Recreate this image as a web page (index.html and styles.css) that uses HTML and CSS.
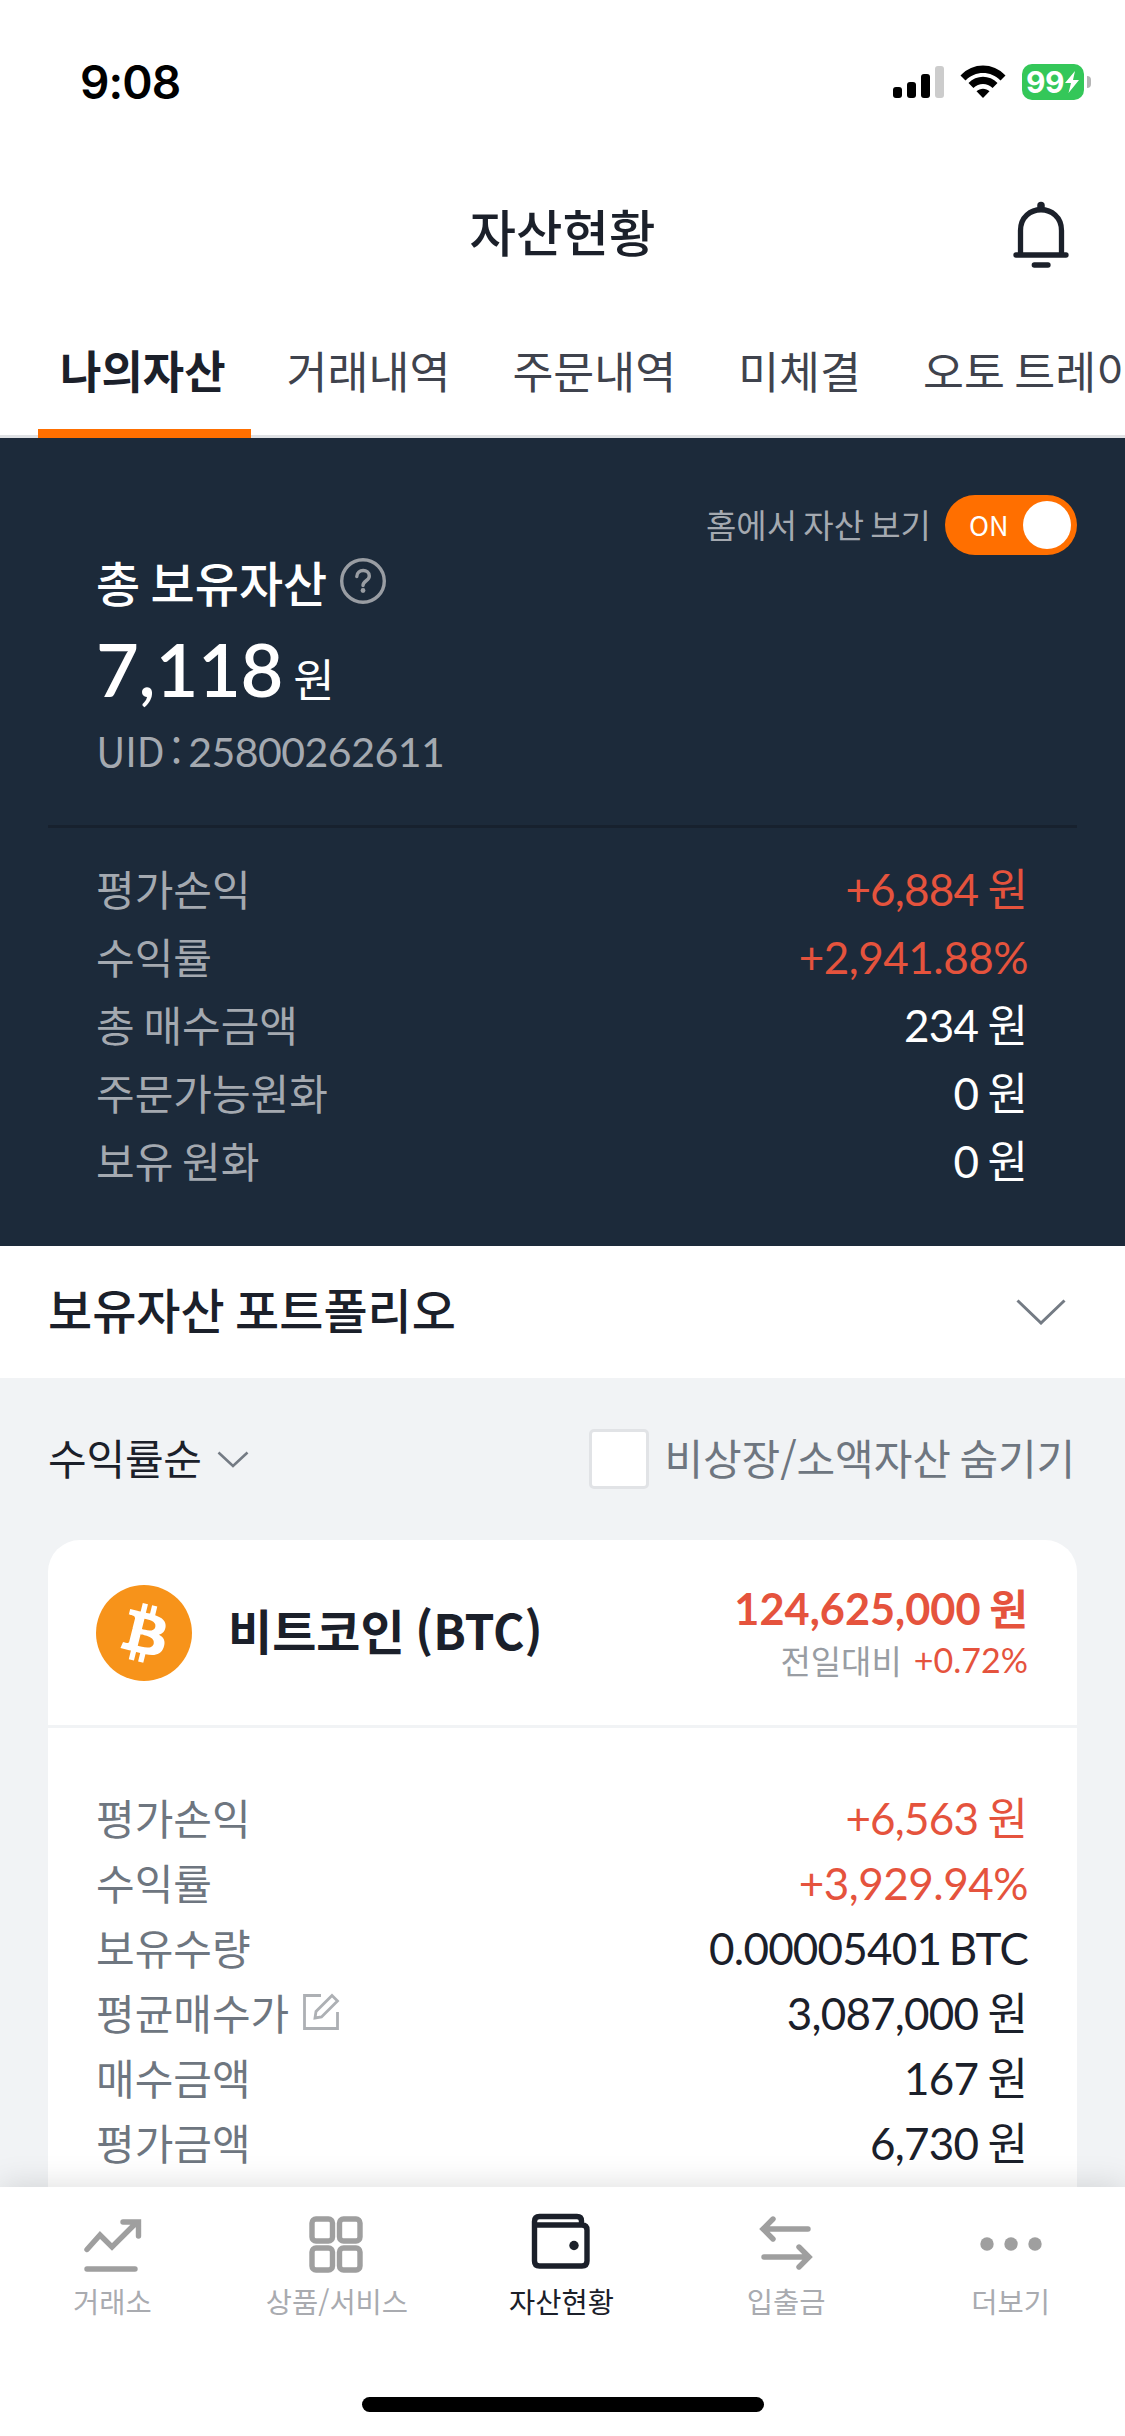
FILE: index.html
```html
<!DOCTYPE html>
<html lang="ko">
<head>
<meta charset="utf-8">
<title>자산현황</title>
<link rel="stylesheet" href="styles.css">
</head>
<body>
<div class="screen">
  <div class="statusbar">
    <span class="clock">9:08</span>
    <div class="status-icons">
      <svg class="signal" width="52" height="34" viewBox="0 0 52 34"><rect x="0" y="22" width="9" height="11" rx="3"/><rect x="14" y="17" width="9" height="16" rx="3"/><rect x="28" y="9" width="9" height="24" rx="3"/><rect x="42" y="1" width="9" height="32" rx="3" fill="#ccc"/></svg>
      <svg class="wifi" width="46" height="34" viewBox="0 0 46 34"><path d="M0.500 10.500C13 -2.800 33 -2.800 45.500 10.500L40.500 15.500C31 5.500 15 5.500 5.500 15.500Z"/><path d="M8.500 18C16.500 9.800 29.500 9.800 37.500 18L32.600 23C27 17.500 19 17.500 13.400 23Z"/><path d="M16.500 26.200C20 22.800 26 22.800 29.500 26.200L23 33Z"/></svg>
      <div class="battery"><span class="battery-level">99</span><svg width="16" height="24" viewBox="0 0 16 24"><path fill="#fff" d="M11 1L1 13H7L4.500 23L15 10H9Z"/></svg></div>
      <span class="battery-tip"></span>
    </div>
  </div>
  <header class="titlebar">
    <h1 class="title">자산현황</h1>
    <svg class="bell" width="58" height="68" viewBox="0 0 58 68" fill="none" stroke="#1b202a" stroke-width="5.300" stroke-linecap="round"><path d="M29 4.500V7" stroke-width="7.500"/><path d="M8.500 53V29.500C8.500 1.800 49.500 1.800 49.500 29.500V53"/><path d="M4 54H54M22.300 64H36"/></svg>
  </header>
  <nav class="tabs">
    <span class="tab tab-active">나의자산</span><span class="tab">거래내역</span><span class="tab">주문내역</span><span class="tab">미체결</span><span class="tab">오토 트레이딩</span>
  </nav>
  <section class="summary">
    <div class="home-view"><span class="home-label">홈에서 자산 보기</span><div class="toggle"><span>ON</span><i class="knob"></i></div></div>
    <div class="total-label"><span>총 보유자산</span><svg width="46" height="50" viewBox="0 0 46 50" fill="none" stroke="#999da3" stroke-width="3.400"><circle cx="23" cy="25" r="21.300"/><path d="M16.800 20.500C17 12.500 29.300 12.500 29.300 20C29.300 25 23 24.500 23 29.500" stroke-linecap="round"/><circle cx="23" cy="34.500" r="2.400" fill="#999da3" stroke="none"/></svg></div>
    <div class="total"><span class="num total-number">7,118</span><span class="total-unit">원</span></div>
    <div class="uid">UID : <span class="num">25800262611</span></div>
    <dl class="rows summary-rows">
      <div class="row"><dt>평가손익</dt><dd class="up"><span class="num">+6,884</span> 원</dd></div>
      <div class="row"><dt>수익률</dt><dd class="up"><span class="num percent">+2,941.88%</span></dd></div>
      <div class="row"><dt>총 매수금액</dt><dd><span class="num">234</span> 원</dd></div>
      <div class="row"><dt>주문가능원화</dt><dd><span class="num">0</span> 원</dd></div>
      <div class="row"><dt>보유 원화</dt><dd><span class="num">0</span> 원</dd></div>
    </dl>
  </section>
  <section class="portfolio"><h2>보유자산 포트폴리오</h2><svg width="50" height="26" viewBox="0 0 50 26" fill="none" stroke="#747b84" stroke-width="3"><path d="M1.500 1.500L25 24L48.500 1.500"/></svg></section>
  <main class="holdings">
    <div class="filters">
      <span class="sort">수익률순</span><svg class="sort-arrow" width="32" height="17" viewBox="0 0 32 17" fill="none" stroke="#747b84" stroke-width="2.600"><path d="M1.500 1.500L16 15L30.500 1.500"/></svg>
      <span class="checkbox"></span><span class="hide-label">비상장/소액자산 숨기기</span>
    </div>
    <article class="card">
      <div class="card-head">
        <svg class="coin" width="96" height="96" viewBox="0 0 32 32"><circle cx="16" cy="16" r="16" fill="#f7931a"/><path fill="#fff" d="M23.189 14.020c.314-2.096-1.283-3.223-3.465-3.975l.708-2.840-1.728-.43-.69 2.765c-.454-.114-.92-.22-1.385-.326l.695-2.783L15.596 6l-.708 2.839c-.376-.086-.746-.17-1.104-.26l.002-.009-2.384-.595-.46 1.846s1.283.294 1.256.312c.7.175.826.638.805 1.006l-.806 3.235c.048.012.110.030.18.057l-.183-.045-1.130 4.532c-.086.212-.303.531-.793.410.018.025-1.256-.313-1.256-.313l-.858 1.978 2.250.561c.418.105.828.215 1.231.318l-.715 2.872 1.727.430.708-2.840c.472.127.930.245 1.378.357l-.706 2.828 1.728.430.715-2.866c2.948.558 5.164.333 6.097-2.333.752-2.146-.037-3.385-1.588-4.192 1.130-.26 1.980-1.003 2.207-2.538zm-3.950 5.538c-.533 2.147-4.148.986-5.320.695l.950-3.805c1.172.293 4.929.872 4.370 3.110zm.535-5.569c-.487 1.953-3.495.960-4.470.717l.860-3.450c.975.243 4.118.696 3.610 2.733z"/></svg>
        <h3 class="coin-name">비트코인 (BTC)</h3>
        <div class="quote"><div class="price"><span class="num">124,625,000</span> 원</div><div class="change"><span>전일대비</span><span class="num up">+0.72%</span></div></div>
      </div>
      <dl class="rows card-rows">
        <div class="row"><dt>평가손익</dt><dd class="up"><span class="num">+6,563</span> 원</dd></div>
        <div class="row"><dt>수익률</dt><dd class="up"><span class="num percent">+3,929.94%</span></dd></div>
        <div class="row"><dt>보유수량</dt><dd><span class="num">0.00005401 BTC</span></dd></div>
        <div class="row"><dt>평균매수가<svg class="edit" width="38" height="38" viewBox="0 0 38 38" fill="none" stroke="#adb0b4" stroke-width="2.800"><path d="M19 2.500H2.500V35.500H35.500V19"/><path d="M13 25L14 18.500L30 2.500L35.500 8L19.500 24Z"/></svg></dt><dd><span class="num">3,087,000</span> 원</dd></div>
        <div class="row"><dt>매수금액</dt><dd><span class="num">167</span> 원</dd></div>
        <div class="row"><dt>평가금액</dt><dd><span class="num">6,730</span> 원</dd></div>
      </dl>
    </article>
  </main>
  <nav class="bottom">
    <div class="items">
      <div class="item"><svg width="66" height="66" viewBox="0 0 66 66"><path d="M8 42.500L21 28L33 40L58 15M44 15H59.500V29M8 62H56"/></svg><span>거래소</span></div>
      <div class="item"><svg width="66" height="66" viewBox="0 0 66 66"><rect x="8" y="12" width="20.500" height="22" rx="4"/><rect x="35.500" y="12" width="20.500" height="22" rx="4"/><rect x="8" y="41" width="20.500" height="22" rx="4"/><rect x="35.500" y="41" width="20.500" height="22" rx="4"/></svg><span>상품/서비스</span></div>
      <div class="item current"><svg width="66" height="66" viewBox="0 0 66 66"><path d="M53.500 18V14Q53.500 9.500 49 9.500H11.500Q6.500 9.500 6.500 14.500V54Q6.500 59 11.500 59H54Q59 59 59 54V23Q59 18 54 18H6.500"/><circle cx="46" cy="38.500" r="4.700" fill="#1b202a" stroke="none"/></svg><span>자산현황</span></div>
      <div class="item"><svg width="66" height="66" viewBox="0 0 66 66"><path d="M55 22H11M20 12L10 22L20 32M11 50H55M46 40L56 50L46 60"/></svg><span>입출금</span></div>
      <div class="item"><svg width="66" height="66" viewBox="0 0 66 66"><g fill="#9f9f9f" stroke="none"><circle cx="9" cy="37" r="6.700"/><circle cx="33" cy="37" r="6.700"/><circle cx="57" cy="37" r="6.700"/></g></svg><span>더보기</span></div>
    </div>
    <div class="home-indicator"></div>
  </nav>
</div>
</body>
</html>
```
FILE: styles.css
```css
* { box-sizing: border-box; }
body, h1, h2, h3, dl, dd { margin: 0; }
body { background: #fff; }
svg { display: block; flex: none; }
.screen {
  display: flex;
  flex-direction: column;
  width: 1125px;
  height: 2436px;
  overflow: hidden;
  color: #1b202a;
  font-family: "Noto Sans CJK KR", sans-serif;
  line-height: 60px;
  white-space: nowrap;
  word-spacing: -3px;
}
.num { font-family: Lato, "Noto Sans CJK KR", sans-serif; }
.statusbar {
  display: flex;
  justify-content: space-between;
  flex: none;
  height: 162px;
  padding: 50px 34px 0 80px;
  color: #000;
  font-family: Inter, sans-serif;
}
.clock { font-size: 46px; font-weight: 600; line-height: 64px; letter-spacing: -0.9px; }
.status-icons { display: flex; align-items: center; height: 64px; }
.wifi { margin-left: 15px; }
.battery {
  display: flex;
  align-items: center;
  justify-content: center;
  width: 62px;
  height: 36px;
  margin-left: 16px;
  border-radius: 10px;
  background: #34c759;
}
.battery-level { color: #fff; font-size: 30px; font-weight: 700; line-height: 36px; letter-spacing: -0.5px; }
.battery-tip { width: 4px; height: 12px; margin-left: 3px; border-radius: 0 6px 6px 0; background: #b5b5b5; }
.titlebar {
  display: grid;
  grid-template-columns: 1fr auto 1fr;
  align-items: center;
  flex: none;
  height: 143px;
  padding: 2px 55px 0;
}
.title { grid-column: 2; margin-bottom: 10px; font-size: 50.5px; font-weight: 500; line-height: 70px; }
.bell { justify-self: end; }
.tabs {
  display: flex;
  flex: none;
  gap: 18px;
  height: 133px;
  padding-left: 38px;
  border-bottom: 3px solid #dfe1e4;
}
.tab {
  flex: none;
  height: 133px;
  padding: 30px 22px 0;
  color: #3f434d;
  font-size: 44.5px;
  line-height: 70px;
}
.tab-active {
  margin-right: -4px;
  padding: 30px 25px 0 22px;
  border-bottom: 9px solid #ff6f00;
  color: #1b202a;
  font-size: 45px;
  font-weight: 700;
}
.summary {
  flex: none;
  height: 808px;
  padding: 57px 48px 0;
  background: #1c2a3a;
  color: #fff;
}
.home-view {
  display: flex;
  align-items: center;
  justify-content: flex-end;
  gap: 14px;
  height: 60px;
  color: #a4a9b0;
  font-size: 33px;
}
.home-label { padding-bottom: 3px; }
.toggle {
  display: flex;
  align-items: center;
  justify-content: space-between;
  width: 132px;
  height: 60px;
  padding: 0 6px 0 24px;
  border-radius: 30px;
  background: #ff6f00;
  color: #fff;
  font-size: 27px;
}
.knob { width: 48px; height: 48px; border-radius: 50%; background: #fff; }
.total-label {
  display: flex;
  align-items: center;
  gap: 13px;
  height: 56px;
  padding: 0 0 5px 48px;
  font-size: 48px;
  font-weight: 500;
}
.total { display: flex; align-items: baseline; height: 104px; padding-left: 48px; line-height: 116px; }
.total-number { font-size: 74px; font-weight: 600; letter-spacing: -0.3px; }
.total-unit { margin-left: 10px; font-size: 45px; line-height: 112px; }
.uid { height: 110px; padding: 4px 0 0 48px; color: #a4a9b0; font-size: 41px; letter-spacing: -0.5px; word-spacing: -4.5px; }
.summary-rows { border-top: 3px solid #17212e; padding-top: 28px; }
.row {
  display: flex;
  align-items: center;
  justify-content: space-between;
  height: 68px;
  padding: 0 49px 5px 48px;
  font-size: 42px;
}
.row dt { display: flex; align-items: center; color: #a4a9b0; }
.row dd { font-size: 44px; }
.row .num { letter-spacing: -0.8px; }
.row .percent { letter-spacing: -0.5px; }
.up { color: #e5533d; }
.portfolio {
  display: flex;
  align-items: center;
  justify-content: space-between;
  flex: none;
  height: 132px;
  padding: 0 59px 0 48px;
}
.portfolio h2 { padding-bottom: 8px; font-size: 48px; font-weight: 500; }
.holdings { flex: none; height: 809px; padding: 51px 48px 0; overflow: hidden; background: #f1f3f5; }
.filters { display: flex; align-items: center; height: 60px; font-size: 42px; }
.sort { padding-bottom: 5px; letter-spacing: -0.2px; }
.sort-arrow { margin-left: 15px; }
.checkbox { width: 60px; height: 60px; margin-left: auto; border: 3px solid #e1e3e6; border-radius: 5px; background: #fff; }
.hide-label { margin: 0 2px 0 16px; padding-bottom: 5px; color: #6e7680; letter-spacing: -0.1px; }
.card { height: 900px; margin-top: 51px; border-radius: 32px; background: #fff; }
.card-head {
  display: flex;
  align-items: center;
  height: 188px;
  padding: 0 49px 0 48px;
  border-bottom: 3px solid #f1f3f5;
}
.coin-name { margin-left: 36px; padding-bottom: 8px; font-size: 48px; font-weight: 700; }
.quote { margin-left: auto; padding-bottom: 1px; text-align: right; }
.price { color: #e5533d; font-size: 42px; font-weight: 700; line-height: 54px; }
.price .num { font-size: 43.3px; }
.change { display: flex; justify-content: flex-end; gap: 12px; color: #999da3; font-size: 33px; line-height: 50px; }
.change .num { font-size: 34px; }
.card-rows { padding-top: 59px; }
.card-rows .row { height: 65px; }
.card-rows dt { color: #6e7680; }
.edit { margin-left: 13px; }
.bottom {
  position: relative;
  flex: none;
  height: 249px;
  background: #fff;
  box-shadow: 0 -2px 30px rgba(0, 0, 0, 0.13);
}
.items { display: grid; grid-template-columns: repeat(5, 1fr); height: 209px; padding: 20px 2px 0 0; }
.item { display: flex; flex-direction: column; align-items: center; gap: 8px; color: #a9abb0; font-size: 28.5px; line-height: 40px; }
.item svg { fill: none; stroke: #9f9f9f; stroke-width: 5.4; stroke-linecap: round; }
.current { color: #1b202a; }
.item.current svg { stroke: #1b202a; }
.home-indicator { width: 402px; height: 15px; margin: 1px auto 0; border-radius: 8px; background: #000; }
```
